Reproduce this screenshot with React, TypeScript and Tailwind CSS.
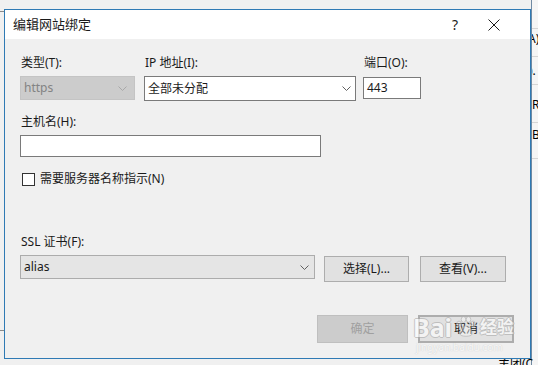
import React from "react";

const FONT = "font-['Noto_Sans','Noto_Sans_CJK_SC',sans-serif]";

/* ========================= SMALL PARTS ========================= */
const Chevron = ({ color = "#606060" }: { color?: string }) => (
  <svg width="9" height="5" viewBox="0 0 9 5" fill="none">
    <path d="M0.5 0.5 L4.5 4.5 L8.5 0.5" stroke={color} strokeWidth="1" />
  </svg>
);

const Label = ({ children }: { children: React.ReactNode }) => (
  <div className="text-[12px] leading-[16px] text-[#1a1a1a] mb-[5px] pl-[1px]">
    {children}
  </div>
);

const Button = ({
  children,
  className = "",
}: {
  children: React.ReactNode;
  className?: string;
}) => (
  <div
    className={`flex items-center justify-center text-[12px] text-[#1a1a1a] bg-[#e1e1e1] border border-[#adadad] ${className}`}
  >
    {children}
  </div>
);

/* ========================= BACKGROUND WINDOW ========================= */
const BackWindow = () => (
  <div className="absolute left-[531px] top-0 w-[7px] h-[365px] bg-[#f5f5f5] border-l border-[#6f8aa3] overflow-hidden">
    <div className="flex flex-col text-[12px] leading-[16px] text-black">
      <div className="h-[29px] border-b border-[#d5d5d5]" />
      <div className="h-[28px] border-b border-[#d5d5d5] -ml-[4px] pt-[2px]">A)</div>
      <div className="h-[28px] border-b border-[#d5d5d5] -ml-[3px] pt-[6px]">).</div>
      <div className="h-[38px] border-b border-[#d5d5d5] pt-[12px]">R)</div>
      <div className="h-[36px] border-b border-[#d5d5d5] pt-[4px]">B)</div>
    </div>
  </div>
);

/* ========================= WATERMARK ========================= */
const OUTLINE =
  "[text-shadow:1px_0_0_#a8a8a8,-1px_0_0_#a8a8a8,0_1px_0_#a8a8a8,0_-1px_0_#a8a8a8]";

const Watermark = () => (
  <div className="absolute left-[413px] top-[312px] pointer-events-none flex flex-col opacity-60">
    <div className="flex items-center">
      <span className={`text-[25px] leading-[30px] font-bold text-white ${OUTLINE}`}>
        Bai
      </span>
      <svg width="24" height="24" viewBox="0 0 24 24" className="ml-[2px]">
        <g fill="rgba(255,255,255,0.6)" stroke="#a8a8a8" strokeWidth="0.9">
          <ellipse cx="5" cy="9" rx="2.3" ry="2.9" />
          <ellipse cx="9.5" cy="4.5" rx="2.3" ry="2.9" />
          <ellipse cx="14.5" cy="4.5" rx="2.3" ry="2.9" />
          <ellipse cx="19" cy="9" rx="2.3" ry="2.9" />
          <path d="M6 19 C6 13 9 11 12 11 C15 11 18 13 18 19 C18 22 6 22 6 19 Z" />
        </g>
      </svg>
      <span className={`ml-[2px] text-[17px] leading-[30px] font-bold text-white ${OUTLINE}`}>
        经验
      </span>
    </div>
    <div className="text-[10px] leading-[12px] text-white [text-shadow:0_0_1px_#a0a0a0] -mt-[1px] pl-[3px]">
      jingyan.baidu.com
    </div>
  </div>
);

/* ========================= APP ========================= */
const App: React.FC = () => {
  return (
    <div className={`relative w-[538px] h-[365px] overflow-hidden bg-[#f0f0f0] ${FONT}`}>
      {/* desktop leftovers */}
      <div className="absolute left-0 top-[11px] w-[5px] border-t border-[#8a8a8a]" />
      <div className="absolute left-0 top-[330px] w-[5px] border-t border-[#8a8a8a]" />
      <BackWindow />
      <div className="absolute left-[498px] top-[356px] text-[12px] leading-[16px] text-black">
        主团(C
      </div>

      {/* dialog */}
      <div className="absolute left-[4px] top-[9px] w-[527px] h-[350px] border border-[#2f7ab4] bg-[#f0f0f0] flex flex-col">
        {/* title bar */}
        <div className="h-[29px] bg-white flex items-center shrink-0">
          <div className="pl-[8px] text-[13px] text-[#1a1a1a] flex-1">编辑网站绑定</div>
          <div className="w-[14px] text-[14px] text-[#1a1a1a] mr-[22px]">?</div>
          <svg width="12" height="12" viewBox="0 0 12 12" className="mr-[30px]">
            <path d="M0.5 0.5 L11.5 11.5 M11.5 0.5 L0.5 11.5" stroke="#1a1a1a" strokeWidth="1" />
          </svg>
        </div>

        {/* body */}
        <div className="flex flex-col pl-[15px] pt-[16px]">
          {/* row 1 */}
          <div className="flex items-start">
            <div className="flex flex-col w-[115px]">
              <Label>类型(T):</Label>
              <div className="h-[24px] bg-[#cccccc] border border-[#c4c4c4] flex items-center justify-between pl-[3px] pr-[7px] text-[12px] text-[#838383]">
                <span>https</span>
                <Chevron color="#a8a8a8" />
              </div>
            </div>
            <div className="flex flex-col w-[212px] ml-[9px]">
              <Label>IP 地址(I):</Label>
              <div className="h-[25px] bg-white border border-[#7a7a7a] flex items-center justify-between pl-[3px] pr-[4px] text-[12px] text-[#1a1a1a]">
                <span>全部未分配</span>
                <Chevron />
              </div>
            </div>
            <div className="flex flex-col w-[58px] ml-[7px]">
              <Label>端口(O):</Label>
              <div className="h-[22px] mt-[1px] bg-white border border-[#7a7a7a] flex items-center pl-[3px] text-[12px] text-[#1a1a1a]">
                443
              </div>
            </div>
          </div>

          {/* host */}
          <div className="flex flex-col w-[301px] mt-[13px]">
            <Label>主机名(H):</Label>
            <div className="h-[22px] bg-white border border-[#7a7a7a]" />
          </div>

          {/* checkbox */}
          <div className="flex items-center mt-[14px] pl-[2px]">
            <div className="w-[13px] h-[13px] bg-white border border-[#333333]" />
            <span className="ml-[5px] text-[12px] leading-[16px] text-[#1a1a1a]">
              需要服务器名称指示(N)
            </span>
          </div>

          {/* ssl */}
          <div className="flex flex-col mt-[47px]">
            <Label>SSL 证书(F):</Label>
            <div className="flex items-start">
              <div className="w-[295px] h-[24px] bg-[#e5e5e5] border border-[#acacac] flex items-center justify-between pl-[3px] pr-[5px] text-[12px] text-[#1a1a1a]">
                <span>alias</span>
                <Chevron />
              </div>
              <Button className="w-[85px] h-[26px] ml-[9px] mt-[1px]">选择(L)...</Button>
              <Button className="w-[86px] h-[26px] ml-[11px] mt-[1px]">查看(V)...</Button>
            </div>
          </div>

          {/* actions */}
          <div className="flex mt-[33px] pl-[297px]">
            <div className="w-[91px] h-[28px] bg-[#cccccc] border border-[#bfbfbf] flex items-center justify-center text-[12px] text-[#a0a0a0]">
              确定
            </div>
            <Button className="w-[96px] h-[28px] ml-[10px] border-2 border-[#0078d7]">取消</Button>
          </div>
        </div>
      </div>

      <Watermark />
    </div>
  );
};

export default App;
